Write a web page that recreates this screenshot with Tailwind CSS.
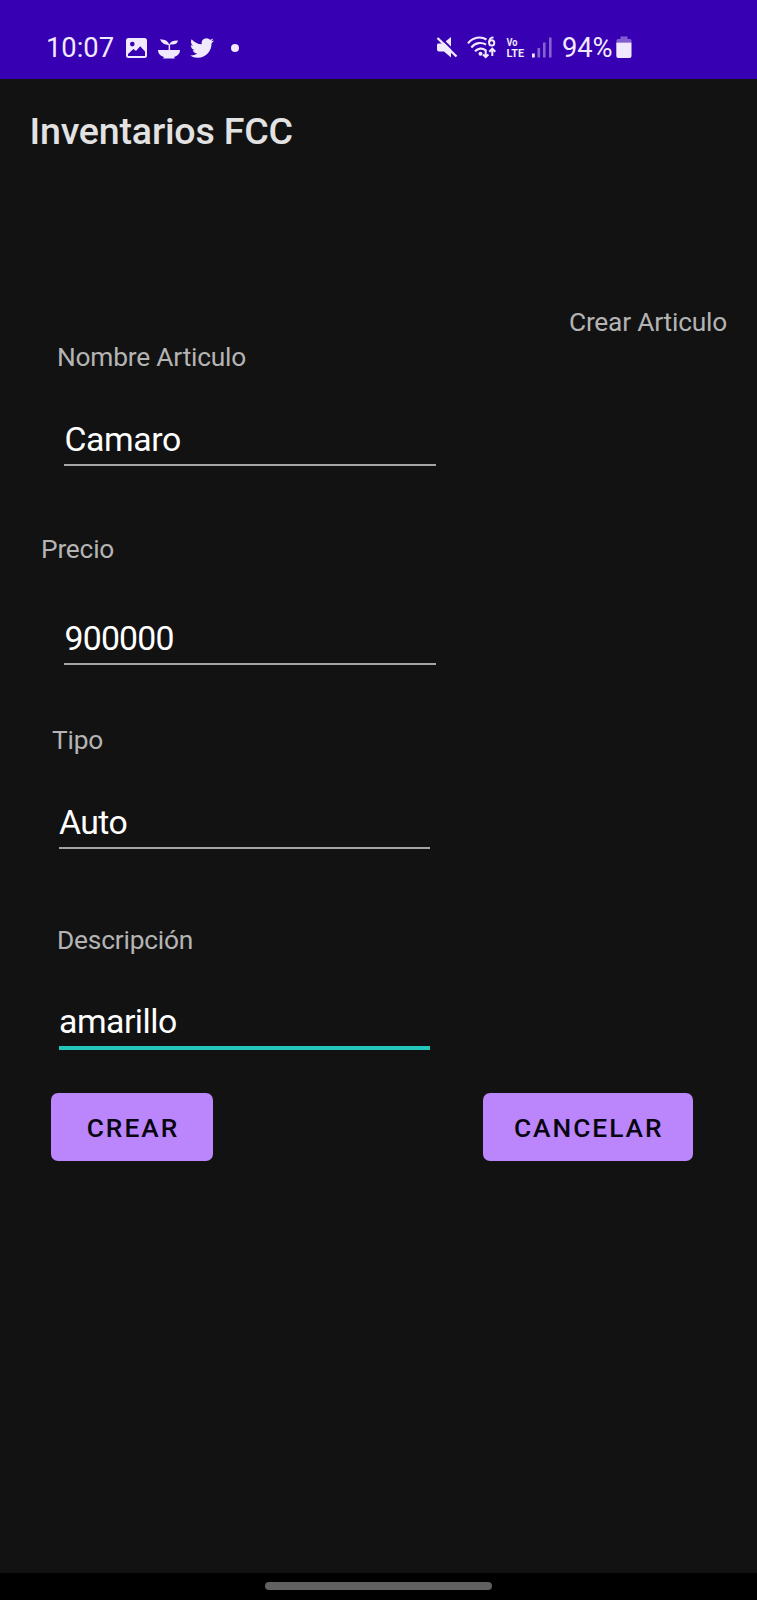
<!DOCTYPE html>
<html lang="es">
<head>
<meta charset="utf-8">
<title>Inventarios FCC</title>
<script src="https://cdn.jsdelivr.net/npm/@tailwindcss/browser@4"></script>
</head>
<body class="bg-[#121212]">
<div class="flex h-[1600px] w-[757px] flex-col overflow-hidden bg-[#121212] font-['Roboto',sans-serif] text-[26.3px] leading-8 tracking-[-0.2px] text-[#b4b4b4]">

  <!-- Status bar -->
  <header class="flex h-[78.5px] shrink-0 items-start bg-[#3700b3] pl-[46px] pt-8 text-[#f1e9fd]">
    <span class="w-[80px] text-[27.3px] leading-8 tracking-normal">10:07</span>
    <svg class="mt-[6px] h-5 w-[21px]" viewBox="0 0 21 20" fill="currentColor"><path fill-rule="evenodd" d="M2.500 0h16A2.500 2.500 0 0 1 21 2.500v15a2.500 2.500 0 0 1-2.500 2.500h-16A2.500 2.500 0 0 1 0 17.500v-15A2.500 2.500 0 0 1 2.500 0zM6.300 3.800a2.300 2.300 0 1 0 0 4.600 2.300 2.300 0 0 0 0-4.600zM2 18h17v-4.500L14.200 8.300 10 13 7.500 11 2 16z"/></svg>
    <svg class="ml-[11px] mt-[7px] h-5 w-[22px]" viewBox="0 0 22 20" fill="currentColor"><path d="M0 11h22c0 3.500-2.500 6-6 7l1 1.500H5L6 18c-3.500-1-6-3.500-6-7z"/><path d="M2 .3c4.800.2 8 1.600 9.200 5.200C12.500 2.800 15 1.300 20 1.500c-.8 3.500-3.300 4.400-7.900 4V11.500h-1.500V6C6.500 6 3.500 4 2 .3z"/></svg>
    <svg class="ml-[10px] mt-[4px] h-6 w-6" viewBox="0 0 24 24" fill="currentColor"><path d="M23.950 4.570a10 10 0 0 1-2.820.77 4.960 4.960 0 0 0 2.160-2.720c-.95.550-2 .95-3.130 1.180a4.920 4.920 0 0 0-8.380 4.480C7.690 8.090 4.070 6.130 1.640 3.160a4.820 4.820 0 0 0-.67 2.480c0 1.710.870 3.210 2.190 4.100a4.900 4.900 0 0 1-2.230-.62v.06a4.920 4.920 0 0 0 3.950 4.830 5 5 0 0 1-2.210.08 4.940 4.940 0 0 0 4.600 3.420A9.870 9.870 0 0 1 0 19.540a13.990 13.990 0 0 0 7.550 2.210c9.050 0 14-7.500 14-13.990 0-.21 0-.42-.02-.63a9.940 9.940 0 0 0 2.460-2.550z"/></svg>
    <span class="ml-[17px] mt-3 size-[7.500px] rounded-full bg-current"></span>

    <svg class="ml-[197.500px] mt-[4px] h-[23px] w-[22px]" viewBox="0 0 22 23" fill="currentColor"><path d="M2 7.500h5L15 1v20.500L8 15.500H3a2 2 0 0 1-2-2v-5z"/><path d="M3 .2 21.500 18.300" stroke="#3700b3" stroke-width="2"/><path d="M1.500 2 20.500 20.500" stroke="currentColor" stroke-width="2.400"/></svg>
    <svg class="ml-[9px] mt-[4px] h-[23px] w-[30px]" viewBox="0 0 30 23" fill="none" stroke="currentColor" stroke-width="2.100"><path d="M1 7.300C6 .8 14 .2 19.500 3.500M4.300 11.500C8.500 6.300 14.500 6 19 8.500M8 15.300c3-3.300 7.500-3.500 10.500-1"/><circle cx="13.500" cy="17.700" r="2" fill="currentColor" stroke="none"/><path d="M18.700 13.500V21M16 18.500l2.700 2.700 2.700-2.700M25.300 20v-7M22.300 15.700l3-3 3 3" stroke-width="2"/><circle cx="24.700" cy="6.900" r="2.600" stroke-width="1.900"/><path d="M26.500 1.600c-3-.5-4.500 2-4.500 5.300" stroke-width="1.900"/></svg>
    <svg class="ml-[9px] mt-[4px] h-[23px] w-[19px]" viewBox="0 0 19 23" fill="currentColor" font-family="Roboto, sans-serif" font-weight="700" letter-spacing="0"><text x=".5" y="10" font-size="10" textLength="11" lengthAdjust="spacingAndGlyphs">Vo</text><text x=".5" y="20.800" font-size="10.500" textLength="17.500" lengthAdjust="spacingAndGlyphs">LTE</text></svg>
    <svg class="ml-[7px] mt-[4px] h-[23px] w-[21px]" viewBox="0 0 21 23" fill="currentColor"><path d="M0 17.500h2.800v4H0z"/><path opacity=".42" d="M5.500 12h2.600v9.500H5.500zM11 6.500h2.600v15H11zM17 1.500h2.600v20H17z"/></svg>
    <span class="ml-[9px] w-[53.500px] text-[27.300px] leading-8 tracking-[-0.100px]">94%</span>
    <svg class="mt-[4px] h-[23px] w-[16px]" viewBox="0 0 16 23" fill="currentColor"><path opacity=".4" d="M4.500.5h7V3H14a1.500 1.500 0 0 1 1.500 1.500V6.500H.5V4.500A1.500 1.500 0 0 1 2 3h2.500z"/><path d="M.3 6.500h15.200V20a2 2 0 0 1-2 2H2.300a2 2 0 0 1-2-2z"/></svg>
  </header>

  <!-- App bar -->
  <h1 class="mt-[28.500px] h-[48.500px] shrink-0 pl-[29.500px] text-[37.600px] font-medium leading-[48px] text-[#e2e2e2]">Inventarios FCC</h1>

  <main class="flex h-[1417px] flex-col pt-[150px]">
    <p class="pr-[30px] text-right">Crear Articulo</p>

    <label for="nombre" class="ml-[57px] mt-[3.500px]">Nombre Articulo</label>
    <input id="nombre" value="Camaro" class="ml-[64px] mt-[45px] h-[48px] w-[371.500px] border-b-2 border-[#a6a4a6] pb-[3px] pl-[.5px] text-[33.800px] tracking-[-0.400px] text-white outline-none">

    <label for="precio" class="ml-[41px] mt-[67px]">Precio</label>
    <input id="precio" value="900000" class="ml-[64px] mt-[52px] h-[48px] w-[371.500px] border-b-2 border-[#a6a4a6] pb-[3px] pl-[.5px] text-[33.800px] tracking-[-0.800px] text-white outline-none">

    <label for="tipo" class="ml-[52px] mt-[59px]">Tipo</label>
    <input id="tipo" value="Auto" class="ml-[59px] mt-[45px] h-[48px] w-[371px] border-b-2 border-[#a6a4a6] pb-[3px] text-[33.800px] tracking-[-0.600px] text-white outline-none">

    <label for="descripcion" class="ml-[57px] mt-[75px]">Descripción</label>
    <input id="descripcion" value="amarillo" class="ml-[59px] mt-[45px] h-[49px] w-[371px] border-b-4 border-[#22c7b9] pb-[4px] text-[33.800px] tracking-[-0.500px] text-white outline-none">

    <div class="ml-[51px] mr-[64.500px] mt-[43px] flex justify-between font-medium tracking-[2px] text-[#090510]">
      <button class="h-[68px] w-[162px] rounded-[7px] bg-[#bb86fc] pl-[2px] pt-px">CREAR</button>
      <button class="h-[68px] w-[209.500px] rounded-[7px] bg-[#bb86fc] pl-[2px] pt-px">CANCELAR</button>
    </div>
  </main>

  <!-- Gesture navigation bar -->
  <footer class="flex grow justify-center bg-black pt-[9.500px]">
    <div class="h-2 w-[227px] rounded-full bg-[#616161]"></div>
  </footer>
</div>
</body>
</html>
